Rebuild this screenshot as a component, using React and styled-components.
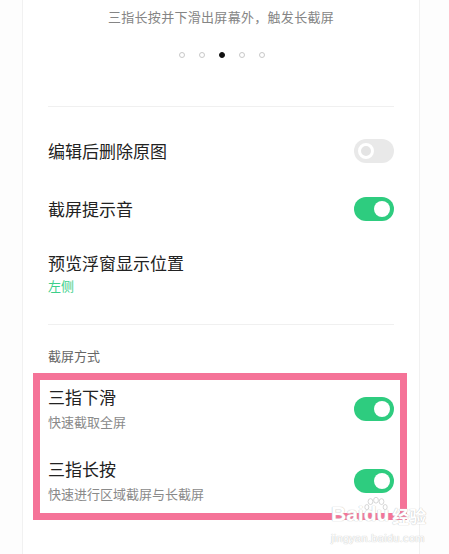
import React from "react";
import styled, { createGlobalStyle } from "styled-components";

const Global = createGlobalStyle`
  html, body { margin: 0; padding: 0; background: #fdfdfd; }
  body { font-family: "Noto Sans CJK SC", "Noto Sans", sans-serif; }
`;

const Page = styled.div`
  width: 449px;
  height: 554px;
  position: relative;
  overflow: hidden;
  background: #fdfdfd;
`;

const Screen = styled.div`
  margin-left: 22px;
  width: 398px;
  height: 554px;
  box-sizing: border-box;
  background: #fff;
  border-left: 1px solid #f1f1f1;
  border-right: 1px solid #f1f1f1;
  padding: 7px 25px 0 25px;
  display: flex;
  flex-direction: column;
`;

const Caption = styled.div`
  text-align: center;
  font-size: 13px;
  line-height: 20px;
  color: #858585;
  letter-spacing: 0.3px;
`;

const Dots = styled.div`
  margin-top: 25px;
  display: flex;
  justify-content: center;
  gap: 14px;
  padding-left: 2px;
`;

const Dot = styled.span`
  width: 6px;
  height: 6px;
  border-radius: 50%;
  box-sizing: border-box;
  background: ${(p) => (p.$active ? "#111" : "#fff")};
  border: 1px solid ${(p) => (p.$active ? "#111" : "#c8c8c8")};
`;

const Divider = styled.div`
  height: 1px;
  background: #f0f0f0;
  margin-top: ${(p) => p.$top}px;
`;

const Row = styled.div`
  display: flex;
  align-items: center;
  justify-content: space-between;
  min-height: 58px;
`;

const StackRow = styled.div`
  display: flex;
  flex-direction: column;
  gap: 1px;
  padding-top: 13px;
`;

const TextBlock = styled.div`
  display: flex;
  flex-direction: column;
  gap: ${(p) => p.$gap || 1}px;
`;

const Title = styled.div`
  font-size: 17px;
  line-height: 24px;
  color: #222;
`;

const Sub = styled.div`
  font-size: 13px;
  line-height: 20px;
  color: ${(p) => (p.$green ? "#3ccf8a" : "#8a8a8a")};
`;

const SectionHeader = styled.div`
  margin-top: 21px;
  font-size: 13px;
  line-height: 20px;
  color: #666;
`;

const Highlight = styled.div`
  margin: 7px -13px 0 -15px;
  border: 7px solid #f57398;
  padding: 5px 6px 9px 8px;
  display: flex;
  flex-direction: column;
  gap: 25px;
`;

const BoxRow = styled.div`
  display: flex;
  align-items: center;
  justify-content: space-between;
`;

const Track = styled.div`
  width: 40px;
  height: 24px;
  border-radius: 12px;
  box-sizing: border-box;
  background: ${(p) => (p.$on ? "#2ecc7f" : "#e9e9e9")};
  display: flex;
  align-items: center;
  justify-content: ${(p) => (p.$on ? "flex-end" : "flex-start")};
  padding: 0 4px;
  flex-shrink: 0;
`;

const Knob = styled.div`
  width: 16px;
  height: 16px;
  border-radius: 50%;
  box-sizing: border-box;
  background: ${(p) => (p.$on ? "#fff" : "#e4e4e4")};
  border: ${(p) => (p.$on ? "none" : "3px solid #fff")};
`;

const Toggle = ({ on }) => (
  <Track $on={on}>
    <Knob $on={on} />
  </Track>
);

const Watermark = styled.div`
  position: absolute;
  left: 331px;
  top: 500px;
  display: flex;
  flex-direction: column;
  align-items: flex-start;
  color: #fff;
  font-family: "Liberation Sans", Arial, sans-serif;
  text-shadow: 0 0 1px #c8c8c8, 0 0 1px #c8c8c8;
  pointer-events: none;
`;

const MarkTop = styled.div`
  display: flex;
  align-items: flex-end;
  font-size: 21px;
  font-weight: bold;
  line-height: 28px;
`;

const Paw = styled.span`
  position: relative;
  display: inline-flex;
  align-items: flex-end;
`;

const PawIcon = styled.svg`
  position: absolute;
  left: -2px;
  top: -3px;
`;

const MarkCn = styled.span`
  font-family: "Noto Sans CJK SC", sans-serif;
  font-size: 17px;
  line-height: 24px;
  margin-left: 3px;
  font-weight: bold;
`;

const MarkUrl = styled.div`
  font-size: 11px;
  line-height: 14px;
  margin-top: 3px;
  letter-spacing: 0.3px;
`;

export default function App() {
  return (
    <Page>
      <Global />
      <Screen>
        <Caption>三指长按并下滑出屏幕外，触发长截屏</Caption>
        <Dots>
          <Dot />
          <Dot />
          <Dot $active />
          <Dot />
          <Dot />
        </Dots>
        <Divider $top={48} />
        <div style={{ height: 15 }} />
        <Row>
          <Title>编辑后删除原图</Title>
          <Toggle on={false} />
        </Row>
        <Row>
          <Title>截屏提示音</Title>
          <Toggle on />
        </Row>
        <StackRow>
          <Title>预览浮窗显示位置</Title>
          <Sub $green>左侧</Sub>
        </StackRow>
        <Divider $top={28} />
        <SectionHeader>截屏方式</SectionHeader>
        <Highlight>
          <BoxRow>
            <TextBlock $gap={3}>
              <Title>三指下滑</Title>
              <Sub>快速截取全屏</Sub>
            </TextBlock>
            <Toggle on />
          </BoxRow>
          <BoxRow>
            <TextBlock $gap={3}>
              <Title>三指长按</Title>
              <Sub>快速进行区域截屏与长截屏</Sub>
            </TextBlock>
            <Toggle on />
          </BoxRow>
        </Highlight>
      </Screen>
      <Watermark>
        <MarkTop>
          Bai
          <Paw>
            <PawIcon width="28" height="22" viewBox="0 0 30 24">
              <g fill="#fff" stroke="#c8c8c8" strokeWidth="0.8">
                <ellipse cx="9" cy="5" rx="2.6" ry="3.2" />
                <ellipse cx="15" cy="3.5" rx="2.6" ry="3.2" />
                <ellipse cx="21" cy="5" rx="2.6" ry="3.2" />
                <ellipse cx="5" cy="11" rx="2.2" ry="2.8" />
                <ellipse cx="25" cy="11" rx="2.2" ry="2.8" />
              </g>
            </PawIcon>
            du
          </Paw>
          <MarkCn>经验</MarkCn>
        </MarkTop>
        <MarkUrl>jingyan.baidu.com</MarkUrl>
      </Watermark>
    </Page>
  );
}
